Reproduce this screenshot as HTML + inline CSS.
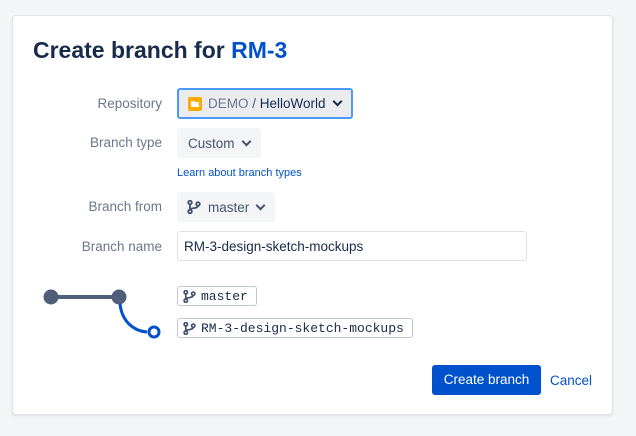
<!DOCTYPE html>
<html><head><style>
body{margin:0;width:636px;height:436px;background:#f4f5f7;font-family:"Liberation Sans",sans-serif;position:relative;overflow:hidden}
.card{position:absolute;left:12px;top:15px;width:599px;height:398px;background:#fff;border:1px solid #e1e3e8;border-radius:4px;box-shadow:0 1px 2px rgba(9,30,66,.1)}
.a{position:absolute}
h1{position:absolute;left:33px;top:37px;margin:0;font-size:23px;font-weight:bold;color:#172b4d}
h1 span{color:#0052cc}
.lbl{position:absolute;right:474px;font-size:13.5px;color:#6b778c;text-align:right}
.btn{position:absolute;background:#f4f5f7;border-radius:3px;font-size:13.5px;color:#42526e;display:flex;align-items:center;box-sizing:border-box}
.chev{display:inline-block;width:5px;height:5px;border-right:2px solid #42526e;border-bottom:2px solid #42526e;transform:rotate(45deg);margin-left:8px;margin-top:-4px}
.tag{position:absolute;border:1px solid #c1c7d0;border-radius:3px;font-family:"Liberation Mono",monospace;font-size:13px;color:#172b4d;display:flex;align-items:center;box-sizing:border-box;padding-left:5px;height:20px}
</style></head><body>
<div class="card"></div>
<h1>Create branch for <span>RM-3</span></h1>
<div class="lbl" style="top:96px">Repository</div>
<div class="btn" style="left:177px;top:88px;width:176px;height:31px;background:#ebecf0;border:2px solid #4c9aff;padding-left:9px"><svg width="14" height="14" viewBox="0 0 14 14" style="margin-right:6px"><rect width="14" height="14" rx="2" fill="#ffab00"/><path d="M3 4h3l1 1h4v5H3z" fill="#fff"/></svg><span style="color:#6b778c">DEMO</span>&nbsp;/&nbsp;<span style="color:#172b4d">HelloWorld</span><span class="chev" style="border-color:#172b4d"></span></div>
<div class="lbl" style="top:135px">Branch type</div>
<div class="btn" style="left:177px;top:128px;width:84px;height:30px;padding-left:11px">Custom<span class="chev"></span></div>
<div class="a" style="left:177px;top:167px;font-size:11px;color:#0052cc">Learn about branch types</div>
<div class="lbl" style="top:199px">Branch from</div>
<div class="btn" style="left:177px;top:192px;width:98px;height:30px;padding-left:10px">
<svg width="14" height="14" viewBox="0 0 14 14" style="margin-right:7px"><g fill="none" stroke="#42526e" stroke-width="1.8"><circle cx="3" cy="2.5" r="1.8"/><circle cx="3" cy="11.5" r="1.8"/><circle cx="11" cy="4" r="1.8"/><path d="M3 4.3v5.4M11 5.8c0 3-8 2-8 4"/></g></svg>master<span class="chev"></span></div>
<div class="lbl" style="top:239px">Branch name</div>
<div class="a" style="left:177px;top:231px;width:350px;height:30px;border:1px solid #dfe1e6;border-radius:3px;box-sizing:border-box;font-size:13.5px;color:#172b4d;padding:7px 0 0 6px">RM-3-design-sketch-mockups</div>
<svg class="a" style="left:0;top:0" width="200" height="350"><line x1="51" y1="297" x2="119" y2="297" stroke="#505f79" stroke-width="4"/><circle cx="51" cy="297" r="7.5" fill="#505f79"/><circle cx="119" cy="297" r="7.5" fill="#505f79"/><path d="M120 304c2 18 14 27 27 28" fill="none" stroke="#0052cc" stroke-width="3"/><circle cx="154" cy="332" r="5" fill="#fff" stroke="#0052cc" stroke-width="3"/></svg>
<div class="tag" style="left:177px;top:286px;width:80px"><svg width="13" height="13" viewBox="0 0 14 14" style="margin-right:5px"><g fill="none" stroke="#42526e" stroke-width="1.8"><circle cx="3" cy="2.5" r="1.8"/><circle cx="3" cy="11.5" r="1.8"/><circle cx="11" cy="4" r="1.8"/><path d="M3 4.3v5.4M11 5.8c0 3-8 2-8 4"/></g></svg>master</div>
<div class="tag" style="left:177px;top:318px;width:236px"><svg width="13" height="13" viewBox="0 0 14 14" style="margin-right:5px"><g fill="none" stroke="#42526e" stroke-width="1.8"><circle cx="3" cy="2.5" r="1.8"/><circle cx="3" cy="11.5" r="1.8"/><circle cx="11" cy="4" r="1.8"/><path d="M3 4.3v5.4M11 5.8c0 3-8 2-8 4"/></g></svg>RM-3-design-sketch-mockups</div>
<div class="a" style="left:432px;top:365px;width:109px;height:30px;background:#0052cc;border-radius:3px;color:#fff;font-size:13.5px;text-align:center;line-height:30px">Create branch</div>
<div class="a" style="left:550px;top:373px;font-size:13.5px;color:#0052cc">Cancel</div>
</body></html>
